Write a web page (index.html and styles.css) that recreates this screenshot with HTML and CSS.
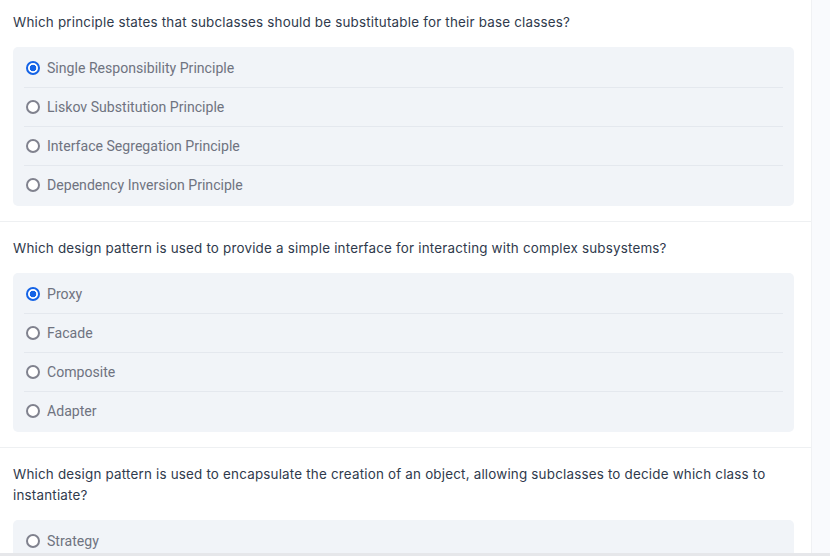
FILE: index.html
```html
<!DOCTYPE html>
<html>
<head>
<meta charset="utf-8">
<link rel="stylesheet" href="styles.css">
</head>
<body>
<div class="page">
  <main class="quiz">
    <section class="question">
      <h3 class="q-text">Which principle states that subclasses should be substitutable for their base classes?</h3>
      <ul class="options">
        <li class="option"><span class="radio checked"></span><span class="label">Single Responsibility Principle</span></li>
        <li class="option"><span class="radio"></span><span class="label">Liskov Substitution Principle</span></li>
        <li class="option"><span class="radio"></span><span class="label">Interface Segregation Principle</span></li>
        <li class="option"><span class="radio"></span><span class="label">Dependency Inversion Principle</span></li>
      </ul>
    </section>
    <section class="question">
      <h3 class="q-text">Which design pattern is used to provide a simple interface for interacting with complex subsystems?</h3>
      <ul class="options">
        <li class="option"><span class="radio checked"></span><span class="label">Proxy</span></li>
        <li class="option"><span class="radio"></span><span class="label">Facade</span></li>
        <li class="option"><span class="radio"></span><span class="label">Composite</span></li>
        <li class="option"><span class="radio"></span><span class="label">Adapter</span></li>
      </ul>
    </section>
    <section class="question">
      <h3 class="q-text">Which design pattern is used to encapsulate the creation of an object, allowing subclasses to decide which class to instantiate?</h3>
      <ul class="options">
        <li class="option"><span class="radio"></span><span class="label">Strategy</span></li>
        <li class="option"><span class="radio"></span><span class="label">Factory Method</span></li>
        <li class="option"><span class="radio"></span><span class="label">Observer</span></li>
        <li class="option"><span class="radio"></span><span class="label">Singleton</span></li>
      </ul>
    </section>
  </main>
  <aside class="side"></aside>
</div>
<div class="hbar"></div>
</body>
</html>
```
FILE: styles.css
```css
html, body {
  margin: 0;
  padding: 0;
  height: 556px;
  overflow: hidden;
  background: #ffffff;
}
.page {
  display: flex;
  height: 556px;
  overflow: hidden;
}
.quiz {
  width: 811px;
  flex: none;
  margin-top: -4px;
  background: #ffffff;
}
.side {
  flex: 1;
  background: #f9fafd;
  border-left: 1px solid #f0f1f4;
}
.question {
  padding: 16px 17px 15px 13px;
  border-bottom: 1px solid #eef0f2;
}
.q-text {
  margin: 0 0 14px;
  font-family: Inter, "Liberation Sans", sans-serif;
  font-weight: 400;
  font-size: 13.4px;
  letter-spacing: 0.2px;
  line-height: 21px;
  color: #2f3a4c;
}
.options {
  list-style: none;
  margin: 0;
  padding: 2px 11px;
  background: #f1f4f8;
  border-radius: 5px;
}
.option {
  display: flex;
  align-items: center;
  height: 38px;
  padding-left: 2px;
}
.option + .option {
  border-top: 1px solid #e4e8ee;
}
.radio {
  box-sizing: border-box;
  width: 14px;
  height: 14px;
  border: 2px solid #80828e;
  border-radius: 50%;
  margin-right: 7px;
  flex: none;
  background: #ffffff;
}
.radio.checked {
  border-color: #1463e6;
  background: radial-gradient(circle, #1463e6 0, #1463e6 3px, #ffffff 3.6px);
}
.label {
  font-family: Roboto, "Liberation Sans", sans-serif;
  font-size: 14.1px;
  color: #6f7380;
}
.hbar {
  position: fixed;
  left: 0;
  right: 0;
  bottom: 0;
  height: 3px;
  background: #e6e7ea;
}
```
